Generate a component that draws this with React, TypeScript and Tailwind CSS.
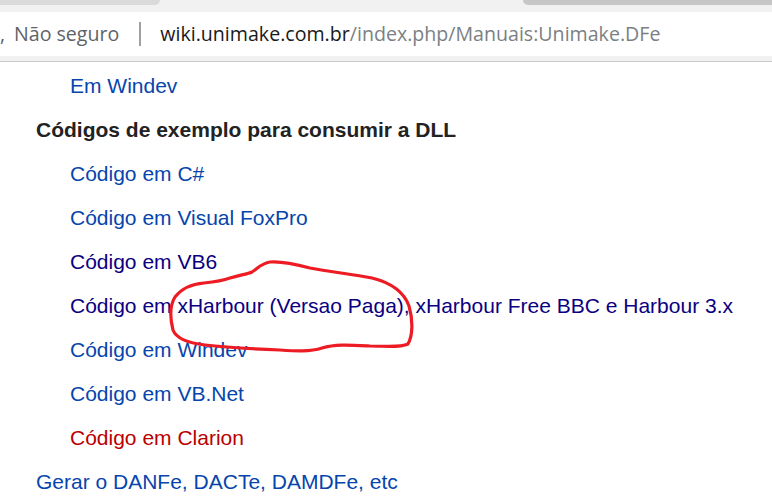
import React from "react";

type Item = { text: string; color: string; indent: boolean; bold?: boolean };

const items: Item[] = [
  { text: "Em Windev", color: "text-[#0645ad]", indent: true },
  { text: "Códigos de exemplo para consumir a DLL", color: "text-[#222222]", indent: false, bold: true },
  { text: "Código em C#", color: "text-[#0645ad]", indent: true },
  { text: "Código em Visual FoxPro", color: "text-[#0645ad]", indent: true },
  { text: "Código em VB6", color: "text-[#0b0080]", indent: true },
  {
    text: "Código em xHarbour (Versao Paga), xHarbour Free BBC e Harbour 3.x",
    color: "text-[#0b0080]",
    indent: true,
  },
  { text: "Código em Windev", color: "text-[#0645ad]", indent: true },
  { text: "Código em VB.Net", color: "text-[#0645ad]", indent: true },
  { text: "Código em Clarion", color: "text-[#ba0000]", indent: true },
  { text: "Gerar o DANFe, DACTe, DAMDFe, etc", color: "text-[#0645ad]", indent: false },
];

function AddressBar() {
  return (
    <div className="bg-[#f1f1f1]">
      {/* faixa superior das abas */}
      <div className="flex h-[5px]">
        <div className="w-[160px] bg-[#dadada] rounded-br-[6px]" />
        <div className="flex-1 bg-[#f1f1f1]" />
        <div className="w-[249px] bg-[#c6c6c6] rounded-bl-[6px]" />
      </div>
      <div className="h-[7px]" />
      <div
        className="h-[44px] bg-white flex items-center text-[19.6px] whitespace-nowrap"
        style={{ fontFamily: '"Open Sans", "Noto Sans", sans-serif' }}
      >
        <span className="text-[#5f6368] w-[14px] overflow-hidden text-right pr-[11px]">,</span>
        <span className="text-[#5f6368]">Não seguro</span>
        <span className="w-[2px] h-[24px] bg-[#a0a0a0] ml-[20px] mr-[19px]" />
        <span className="text-[#1a1a1a]">wiki.unimake.com.br</span>
        <span className="text-[#7b7f84]">/index.php/Manuais:Unimake.DFe</span>
      </div>
      <div className="h-[5px] bg-[#f1f1f1]" />
      <div className="h-[1px] bg-[#c9c9c9]" />
    </div>
  );
}

function Scribble() {
  return (
    <svg
      className="absolute left-[166px] top-[258px] pointer-events-none"
      width="254"
      height="100"
      viewBox="166 258 254 100"
    >
      <path
        d="M175 297 C182 288 192 284 204 283 C214 282 222 281 230 278 C240 275 248 274 252 272 C258 268 262 263 270 262 C282 261 295 264 310 268 C330 272 352 274 372 278 C392 283 404 292 409 306 C413 320 413 335 408 344 C400 348 385 346 370 346 C350 345 335 344 322 348 C310 352 295 351 280 350 C255 349 230 348 205 345 C188 343 176 338 173 330 C170 318 170 305 175 297 Z"
        fill="none"
        stroke="#ed1c24"
        strokeWidth="3.2"
        strokeLinejoin="round"
      />
    </svg>
  );
}

export default function App() {
  return (
    <div className="relative w-[772px] h-[496px] overflow-hidden bg-white">
      <AddressBar />
      <div
        className="pt-[2px] text-[21px]"
        style={{ fontFamily: '"Liberation Sans", Arial, sans-serif' }}
      >
        {items.map((item, i) => (
          <div
            key={i}
            className={`h-[44px] flex items-center whitespace-nowrap ${item.color} ${
              item.indent ? "pl-[70px]" : "pl-[36px]"
            } ${item.bold ? "font-bold" : ""}`}
          >
            {item.text}
          </div>
        ))}
      </div>
      <Scribble />
    </div>
  );
}
